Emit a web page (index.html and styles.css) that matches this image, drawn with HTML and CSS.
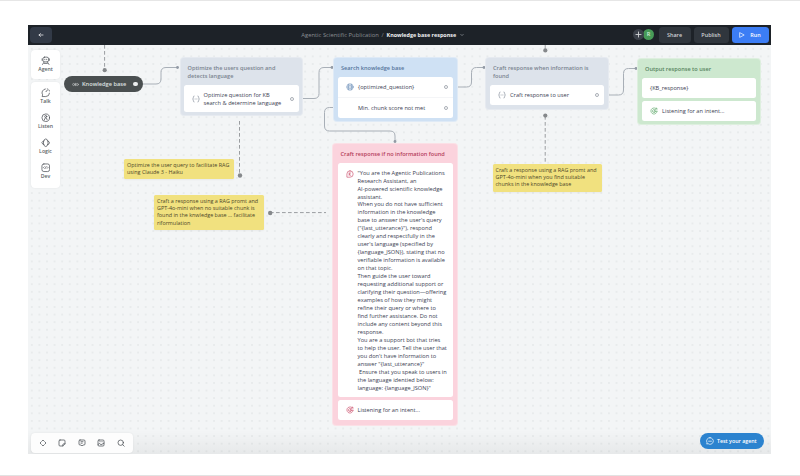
FILE: index.html
```html
<!DOCTYPE html>
<html lang="en">
<head>
<meta charset="utf-8">
<title>Knowledge base response</title>
<link rel="stylesheet" href="styles.css">
</head>
<body>
<main class="app">
  <header class="topbar">
    <button class="back"><svg viewBox="0 0 6 6"><path d="M5 3H1M2.500 1.600 1 3l1.500 1.400"/></svg></button>
    <div class="crumbs"><span>Agentic Scientific Publication</span><i>/</i><b>Knowledge base response</b><svg class="chev" viewBox="0 0 6 6"><path d="M1.800 2.400 3 3.600 4.200 2.400"/></svg></div>
    <div class="actions">
      <div class="people"><span class="plus"><svg viewBox="0 0 10 10"><path d="M5 2.700v4.600M2.700 5h4.600"/></svg></span><span class="avatar">R</span></div>
      <button class="btn share">Share</button>
      <button class="btn publish">Publish</button>
      <button class="btn run"><svg viewBox="0 0 6 6"><path d="M1 .8 5.200 3 1 5.200z"/></svg>Run</button>
    </div>
  </header>
  <section class="canvas">
    <svg class="wires" viewBox="28 45 743 409">
      <g class="dash">
        <path d="M104.600 45V70M239.500 121V175M270 212.600H326M545.200 45V50M545.200 116V163"/>
      </g>
      <g class="dot">
        <circle cx="104.700" cy="70.200" r="2.100"/><circle cx="240" cy="175.500" r="2.200"/><circle cx="270.200" cy="213" r="2.200"/><circle cx="545.300" cy="50.400" r="2.100"/><circle cx="545.300" cy="115.600" r="2.100"/>
      </g>
      <g class="line">
        <path d="M143 84H156Q161 84 161 79V72.500Q161 67.500 166 67.500H178"/>
        <path d="M299 98.500H314Q319 98.500 319 93.500V72.500Q319 67.500 324 67.500H332"/>
        <path d="M453 87H466.500Q471.500 87 471.500 82V72.500Q471.500 67.500 476.500 67.500H484"/>
        <path d="M605 95H618.500Q623.500 95 623.500 90V73.500Q623.500 68.500 628.500 68.500H636"/>
        <path d="M338 107.500H329.500Q324.500 107.500 324.500 112.500V126Q324.500 131 329.500 131H390Q395 131 395 136V142"/>
      </g>
      <g class="end">
        <circle cx="177.500" cy="67.500" r="1.400"/><circle cx="332" cy="67.500" r="1.400"/><circle cx="484" cy="67.500" r="1.400"/><circle cx="636" cy="68.500" r="1.400"/><circle cx="395" cy="141.500" r="1.400"/>
      </g>
    </svg>

    <div class="pill"><svg class="oo" viewBox="0 0 7 5"><circle cx="1.700" cy="2.500" r="1.100"/><circle cx="5.300" cy="2.500" r="1.100"/><path d="M3.500 1.300v2.400"/></svg><span>Knowledge base</span><em></em></div>

    <article class="block slate optimize">
      <h3>Optimize the users question and<br>detects language</h3>
      <div class="card"><div class="row tall"><svg class="ic" viewBox="0 0 8 8"><path d="M2.200 1Q1.300 1 1.300 2v1Q1.300 4 .6 4q.7 0 .7 1v1q0 1 .9 1M5.800 1Q6.700 1 6.700 2v1q0 1 .7 1-.7 0-.7 1v1q0 1-.9 1M3 4h.3M4.700 4h.3"/></svg><p>Optimize question for KB<br>search &amp; determine language</p><i class="port"></i></div></div>
    </article>

    <article class="block blue search">
      <h3>Search knowledge base</h3>
      <div class="card">
        <div class="row"><svg class="ic" viewBox="0 0 8 8"><circle cx="4" cy="4" r="3.200"/><path d="M2.700 1.200v5.600M5.300 1.200v5.600M1 4h1.700M5.300 4H7M2.700 2.800h2.600M2.700 5.200h2.600"/></svg><p>{optimized_question}</p><i class="port"></i></div>
        <div class="row"><svg class="ic" viewBox="0 0 8 8"></svg><p>Min. chunk score not met</p><i class="port"></i></div>
      </div>
    </article>

    <article class="block slate found">
      <h3>Craft response when information is<br>found</h3>
      <div class="card"><div class="row"><svg class="ic" viewBox="0 0 8 8"><path d="M2.200 1Q1.300 1 1.300 2v1Q1.300 4 .6 4q.7 0 .7 1v1q0 1 .9 1M5.800 1Q6.700 1 6.700 2v1q0 1 .7 1-.7 0-.7 1v1q0 1-.9 1M3 4h.3M4.700 4h.3"/></svg><p>Craft response to user</p><i class="port"></i></div></div>
    </article>

    <article class="block green output">
      <h3>Output response to user</h3>
      <div class="card"><div class="row"><p>{KB_response}</p></div></div>
      <div class="card"><div class="row"><svg class="ic" viewBox="0 0 8 8"><path d="M5.600 1.300A3.100 3.100 0 1 0 7.100 4.300M5 2.800A1.600 1.600 0 1 0 5.600 4.300M4 4.100 6.500 1.800M6.300 1v1h1M4 4.200h3"/></svg><p>Listening for an intent...</p></div></div>
    </article>

    <article class="block pink missing">
      <h3>Craft response if no information found</h3>
      <div class="card"><div class="row prompt"><svg class="ic" viewBox="0 0 8 8"><path d="M4 .8A3.200 3.200 0 1 1 4 7.200H.9V4A3.100 3.100 0 0 1 4 .8zM3.200 2.600v2.800M3.200 4.200l1.700-1.500M3.200 4l1.700 1.500"/></svg><p>"You are the Agentic Publications
Research Assistant, an
AI-powered scientific knowledge
assistant.
When you do not have sufficient
information in the knowledge
base to answer the user's query
("{last_utterance}"), respond
clearly and respectfully in the
user's language (specified by
{language_JSON}), stating that no
verifiable information is available
on that topic.
Then guide the user toward
requesting additional support or
clarifying their question—offering
examples of how they might
refine their query or where to
find further assistance. Do not
include any content beyond this
response.
You are a support bot that tries
to help the user. Tell the user that
you don't have information to
answer "{last_utterance}"
 Ensure that you speak to users in
the language identied below:
language: {language_JSON}"</p></div></div>
      <div class="card"><div class="row"><svg class="ic" viewBox="0 0 8 8"><path d="M5.600 1.300A3.100 3.100 0 1 0 7.100 4.300M5 2.800A1.600 1.600 0 1 0 5.600 4.300M4 4.100 6.500 1.800M6.300 1v1h1M4 4.200h3"/></svg><p>Listening for an intent...</p></div></div>
    </article>

    <aside class="note n1">Optimize the user query to facilitate RAG<br>using Claude 3 - Haiku</aside>
    <aside class="note n2">Craft a response using a RAG promt and<br>GPT-4o-mini when no suitable chunk is<br>found in the knwledge base ... facilitate<br>riformulation</aside>
    <aside class="note n3">Craft a response using a RAG promt and<br>GPT-4o-mini when you find suitable<br>chunks in the knowledge base</aside>

    <nav class="side">
      <div class="group agent">
        <a><svg viewBox="0 0 10 10"><rect x="2" y="1.200" width="6" height="5" rx="1.800"/><path d="M1.200 3v1.600M8.800 3v1.600M3.300 6.300 1.600 8.900M6.700 6.300l1.700 2.600M3.300 7.800h3.400M4 3.400v.5M6 3.400v.5"/></svg>Agent</a>
      </div>
      <div class="group tools">
        <a><svg viewBox="0 0 10 10"><path d="M4.600 1A4 4 0 0 0 1.700 7.200L1.200 9H5A4 4 0 0 0 9 5.400M5.200 3.800Q5.200 2.600 6.500 2.600M6.600 1l.8.300M8.500 2.300l.4.900"/></svg>Talk</a>
        <a><svg viewBox="0 0 10 10"><circle cx="5" cy="5" r="4"/><circle cx="5" cy="3.700" r="1.100"/><path d="M3.500 7.300Q3.500 5.300 5 5.300t1.500 2"/></svg>Listen</a>
        <a><svg viewBox="0 0 10 10"><path d="M3 3.200Q3.200 1 5 1t2 2.200M3 6.800Q3.200 9 5 9t2-2.200M2.600 3 .8 5l1.800 2M7.400 3l1.800 2-1.800 2M2.600 3.400v3.200M7.400 3.400v3.200"/></svg>Logic</a>
        <a><svg viewBox="0 0 10 10"><rect x="1" y="1" width="8" height="8" rx="2"/><path d="m3.400 4-.8.800.8.800M6.600 4l.8.800-.8.800M4.700 5.500l.6-1.500"/></svg>Dev</a>
      </div>
    </nav>

    <nav class="dock">
      <svg viewBox="0 0 8 8"><path d="m2.900 2.100 1.100-1.100 1.100 1.100M2.900 5.900 4 7l1.100-1.100M2.100 2.900 1 4l1.100 1.100M5.900 2.900 7 4 5.900 5.100"/></svg>
      <svg viewBox="0 0 8 8"><path d="M2 1h4q1 0 1 1v2.800L4.800 7H2Q1 7 1 6V2q0-1 1-1zM7 4.800H5.800q-1 0-1 1V7"/></svg>
      <svg viewBox="0 0 8 8"><path d="M2 1h4q1 0 1 1v3q0 1-1 1H5L4 7 3 6H2Q1 6 1 5V2q0-1 1-1zM3 2.700h2M3 4.200h1.200"/></svg>
      <svg viewBox="0 0 8 8"><rect x="1" y="1" width="6" height="6" rx="1"/><path d="m1 5.500 1.500-1L4 5.700l3-1.500M3 2.500v.3M5 2.500v.3"/></svg>
      <svg viewBox="0 0 8 8"><circle cx="3.700" cy="3.700" r="2.700"/><path d="m5.700 5.700 1.500 1.500"/></svg>
    </nav>

    <button class="test"><svg viewBox="0 0 8 8"><path d="M4 .7A3.300 3.300 0 1 1 2 6.600L.8 7.100 1 5.600A3.300 3.300 0 0 1 4 .7z"/><path d="M2.600 4.200h2.800"/></svg>Test your agent</button>
  </section>
</main>
</body>
</html>
```
FILE: styles.css
```css
* { box-sizing: border-box; }
html, body { margin: 0; height: 100%; }
body {
  background: #fff;
  border-top: 1px solid #e6e6e6;
  border-bottom: 1px solid #e2e2e2;
  padding: 24px 29px 21px 28px;
  font-family: "Open Sans", "Noto Sans", sans-serif;
  overflow: hidden;
}
svg { fill: none; stroke-linecap: round; stroke-linejoin: round; flex: none; }
button { border: 0; padding: 0; margin: 0; font: inherit; color: inherit; }
h3, p { margin: 0; font-weight: inherit; white-space: pre; }
.app { width: 743px; height: 429px; display: flex; flex-direction: column; }

.topbar {
  height: 20px; background: #1d2228; color: #e6e8ea;
  display: grid; grid-template-columns: 271.300px 1fr auto; align-items: center;
  padding: 0 2.500px 1px 2px;
}
.back { width: 22px; height: 16px; border-radius: 4px; background: #323a47; display: grid; place-items: center; }
.back svg { width: 6px; height: 6px; stroke: #e4e6ea; stroke-width: .8; }
.crumbs { display: flex; align-items: center; font-size: 5.850px; color: #8a8e93; white-space: nowrap; }
.crumbs i { font-style: normal; margin: 0 3px 0 2.500px; }
.crumbs b { font-weight: 700; color: #f0f1f2; font-size: 5.420px; }
.chev { width: 6px; height: 6px; margin-left: 3px; stroke: #858b92; stroke-width: .8; }
.actions { display: flex; align-items: center; gap: 3px; }
.people { display: flex; margin-right: 1.500px; }
.people span { width: 11px; height: 11px; border-radius: 50%; }
.plus { background: #3a4049; position: relative; z-index: 1; }
.plus svg { display: block; width: 11px; height: 11px; stroke: #d4d7da; stroke-width: .8; }
.avatar { margin-left: -.5px; background: #479b58; color: #d6efd9; font-size: 5.500px; font-weight: 600; line-height: 11px; text-align: center; }
.btn { height: 16px; border-radius: 3.500px; background: #30363d; color: #cfd2d5; font-size: 5.450px; font-weight: 600; }
.share { width: 32px; }
.publish { width: 35px; }
.run { width: 37px; background: #3c7df5; color: #fff; display: flex; align-items: center; justify-content: center; gap: 5px; }
.run svg { width: 6px; height: 6px; stroke: #fff; stroke-width: .7; }

.canvas {
  flex: 1; position: relative; overflow: hidden;
  background:
    linear-gradient(#0000 385px, #0000000d),
    radial-gradient(circle, #e8ebec .7px, #0000 1.100px) 0 0 / 7.600px 7.600px,
    #f3f5f6;
}
.wires { position: absolute; inset: 0; width: 743px; height: 409px; }
.dash { stroke: #9a9da0; stroke-width: 1; stroke-dasharray: 3.700 2.300; stroke-linecap: butt; }
.dot { fill: #85888b; }
.line { stroke: #a8afb7; stroke-width: 1; }
.end { fill: #929aa5; }

.pill {
  position: absolute; left: 36px; top: 31px; width: 79px; height: 16px; border-radius: 8px;
  background: #4a4f50; color: #dfe1e1; display: flex; align-items: center; padding: 0 5.500px 0 7.500px;
  font-size: 5.650px; font-weight: 600; white-space: nowrap;
}
.oo { width: 7px; height: 5px; stroke: #b9bcbc; stroke-width: .7; margin-right: 3.500px; }
.pill em { width: 4.500px; height: 4.500px; border-radius: 50%; background: #eceeee; margin-left: auto; }

.block { position: absolute; border-radius: 3px; padding: 0 4px; font-size: 5.680px; }
.block h3 { padding-left: 3px; line-height: 8px; font-size: 5.600px; font-weight: 600; }
.card { background: #fff; border-radius: 2.500px; color: #3c4253; }
.card + .card { margin-top: 3px; }
.row { display: flex; align-items: center; min-height: 20px; padding: 0 5.500px 0 8px; line-height: 8px; }
.row + .row { border-top: 1px solid #f4f5f7; }
.row.tall { height: 27px; }
.ic { width: 8px; height: 8px; margin-right: 4px; stroke: currentColor; stroke-width: .65; }
.port { width: 4px; height: 4px; border-radius: 50%; border: 1px solid #a9aeb6; margin-left: auto; }

.slate { background: #dde3eb; box-shadow: 0 0 0 1px #e6eaf0; color: #7b8490; }
.slate .ic { color: #8d95a0; }
.blue { background: #cfe1f4; box-shadow: 0 0 0 1px #dfeaf6; color: #55759b; }
.blue .ic { color: #7193bb; }
.green { background: #cde8cf; box-shadow: 0 0 0 1px #deefdf; color: #56835e; }
.green .ic { color: #63ab70; }
.pink { background: #fbd3dd; box-shadow: 0 0 0 1px #fbe0e6; color: #b43e5c; }
.pink .ic { color: #cc526d; }

.optimize { left: 153px; top: 13px; width: 121px; height: 57px; padding: 0 3px; }
.optimize .row { padding-left: 7.500px; }
.optimize h3, .found h3 { padding-top: 6px; height: 27px; }
.optimize h3 { padding-left: 3.500px; }
.search { left: 306px; top: 13px; width: 123px; height: 63px; }
.search h3 { height: 19px; padding-top: 6px; }
.search .row + .row { height: 20.500px; }
.found { left: 458px; top: 13px; width: 122px; height: 51px; }
.output { left: 610px; top: 14px; width: 122px; height: 65px; }
.output h3 { height: 19px; padding-top: 6px; }
.missing { left: 305px; top: 99px; width: 124px; height: 281px; padding: 0 4.500px; }
.missing h3 { height: 19px; padding-top: 6px; }
.row.prompt { height: 234px; align-items: flex-start; padding-top: 6.600px; line-height: 7.970px; }

.note { position: absolute; width: 109.500px; padding: 3px; border-radius: 1.500px; background: #f1e17f; box-shadow: 0 1px 2px #0000000c; color: #4d4729; font-size: 5.420px; line-height: 7.350px; white-space: nowrap; }
.n1 { left: 96px; top: 113.500px; height: 20.500px; }
.n2 { left: 126px; top: 149.500px; height: 35px; }
.n3 { left: 464.500px; top: 118.500px; height: 28.500px; }

.side { position: absolute; left: 3px; top: 5px; width: 29px; display: flex; flex-direction: column; gap: 3px; }
.group { background: #fff; border-radius: 4px; box-shadow: 0 0 2px #00000014; display: flex; flex-direction: column; }
.group a { display: flex; flex-direction: column; align-items: center; font-size: 5.150px; font-weight: 600; line-height: 6px; color: #5a5f65; height: 25.900px; }
.group svg { width: 9.500px; height: 9.500px; stroke: #50555b; stroke-width: .8; margin-bottom: .5px; }
.agent { height: 29px; padding-top: 6.400px; }
.tools { height: 106px; padding-top: 6px; }

.dock { position: absolute; left: 3px; top: 388px; width: 102px; height: 20px; border-radius: 4px; background: #fdfdfd; box-shadow: 0 0 2px #00000014; display: flex; align-items: center; justify-content: space-between; padding: 0 8.500px 0 8px; }
.dock svg { width: 8px; height: 8px; stroke: #4b5056; stroke-width: .75; }

.test { position: absolute; left: 672px; top: 388px; width: 64px; height: 16px; border-radius: 8px; background: #2c83cf; color: #fff; font-size: 5.300px; font-weight: 600; display: flex; align-items: center; padding-left: 5.500px; gap: 3.500px; white-space: nowrap; }
.test svg { width: 8px; height: 8px; stroke: #fff; stroke-width: .7; }
```
